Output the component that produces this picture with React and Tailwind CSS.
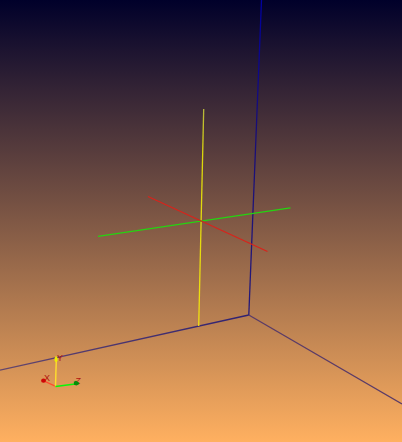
const roomEdges = [
  { x1: 261.5, y1: 0, x2: 248.8, y2: 315, stroke: "url(#wallEdge)" },
  { x1: 0, y1: 370.2, x2: 248.8, y2: 315, stroke: "url(#leftEdge)" },
  { x1: 248.8, y1: 315, x2: 402, y2: 404, stroke: "#5a3b68" },
];

const cursorLines = [
  { x1: 203.7, y1: 109, x2: 198.7, y2: 326, stroke: "url(#cursorY)", width: 1.3 },
  { x1: 98, y1: 236.3, x2: 290.5, y2: 207.8, stroke: "#25d411", width: 1.3 },
  { x1: 148, y1: 196.5, x2: 267.5, y2: 251.5, stroke: "#d9231b", width: 1.2 },
];

function RoomEdges() {
  return (
    <g strokeWidth="1.3">
      {roomEdges.map((edge) => (
        <line key={edge.stroke} {...edge} />
      ))}
    </g>
  );
}

function Cursor() {
  return (
    <g>
      {cursorLines.map(({ width, ...line }) => (
        <line key={line.stroke} strokeWidth={width} {...line} />
      ))}
    </g>
  );
}

function OrientationAxes() {
  return (
    <g>
      <g className="font-['Liberation_Sans',sans-serif] text-[9px]" fill="#b0120e">
        <text x="44" y="381">X</text>
        <text x="57" y="361">Y</text>
        <text x="75" y="384" className="italic">Z</text>
      </g>
      <line x1="55.7" y1="386.3" x2="44" y2="381" stroke="#ff4b2e" strokeWidth="1.3" />
      <line x1="55.5" y1="386.5" x2="56.3" y2="359" stroke="#ffdf2c" strokeWidth="1.4" />
      <line x1="55.5" y1="386.4" x2="75" y2="384" stroke="#08f808" strokeWidth="1.5" />
      <ellipse cx="43.5" cy="380.7" rx="2.4" ry="2.1" fill="#cf0505" />
      <path d="M56 355.8 L54.6 358 V361 L56 362.3 L57.6 361 V358 Z" fill="#eeee00" />
      <path d="M73.8 381.7 L76 380.8 L79.3 382.7 L79 384.2 L76.5 385.4 L74 384.8 Z" fill="#088c08" />
    </g>
  );
}

export default function App() {
  return (
    <main className="h-screen w-full overflow-hidden bg-linear-to-b/srgb from-[#00002a] to-[#ffb060]">
      <svg
        className="block h-full w-full"
        viewBox="0 0 402 442"
        preserveAspectRatio="xMidYMid slice"
        fill="none"
      >
        <defs>
          <linearGradient id="wallEdge" gradientUnits="userSpaceOnUse" x1="0" y1="0" x2="0" y2="315">
            <stop offset="0" stopColor="#0000a0" />
            <stop offset="0.4" stopColor="#170d78" />
            <stop offset="1" stopColor="#251979" />
          </linearGradient>
          <linearGradient id="leftEdge" gradientUnits="userSpaceOnUse" x1="0" y1="0" x2="249" y2="0">
            <stop offset="0" stopColor="#65476c" />
            <stop offset="1" stopColor="#2f2172" />
          </linearGradient>
          <linearGradient id="cursorY" gradientUnits="userSpaceOnUse" x1="0" y1="109" x2="0" y2="326">
            <stop offset="0" stopColor="#b5b53c" />
            <stop offset="0.2" stopColor="#dbd80b" />
            <stop offset="1" stopColor="#efdf12" />
          </linearGradient>
        </defs>
        <RoomEdges />
        <Cursor />
        <OrientationAxes />
      </svg>
    </main>
  );
}
